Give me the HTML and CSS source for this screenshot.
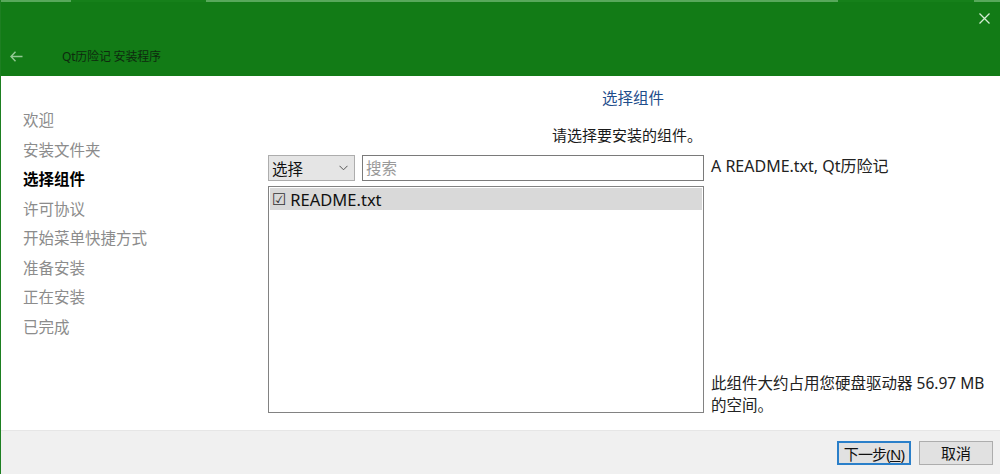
FILE: index.html
```html
<!DOCTYPE html>
<html lang="zh-CN">
<head>
  <meta charset="UTF-8">
  <meta name="viewport" content="width=device-width, initial-scale=1.0">
  <title>Qt历险记 安装程序</title>
  <link rel="stylesheet" href="styles.css">
</head>
<body>
  <div class="window">
    <div class="header">
      <div class="topline"></div>
      <button class="close" title="关闭">
        <svg width="11" height="11" viewBox="0 0 11 11"><path d="M0.5 0.5 L10.5 10.5 M10.5 0.5 L0.5 10.5" stroke="currentColor" stroke-width="1.3" fill="none"/></svg>
      </button>
      <div class="titlebar">
        <span class="back">
          <svg width="13" height="11" viewBox="0 0 13 11"><path d="M5.5 0.8 L1 5.5 L5.5 10.2 M1 5.5 L12.5 5.5" stroke="currentColor" stroke-width="1.4" fill="none"/></svg>
        </span>
        <span class="app-title">Qt历险记 安装程序</span>
      </div>
    </div>

    <div class="body">
      <ul class="steps">
        <li>欢迎</li>
        <li>安装文件夹</li>
        <li class="active">选择组件</li>
        <li>许可协议</li>
        <li>开始菜单快捷方式</li>
        <li>准备安装</li>
        <li>正在安装</li>
        <li>已完成</li>
      </ul>

      <div class="page">
        <h2 class="page-title">选择组件</h2>
        <div class="components">
          <p class="hint">请选择要安装的组件。</p>
          <div class="toolbar">
            <div class="combo">
              <span>选择</span>
              <svg width="9" height="6" viewBox="0 0 9 6"><path d="M0.5 0.8 L4.5 4.8 L8.5 0.8" stroke="#555" stroke-width="1" fill="none"/></svg>
            </div>
            <input class="search" type="text" placeholder="搜索">
          </div>
          <p class="description">A README.txt, Qt历险记</p>
          <ul class="tree">
            <li class="selected"><span class="check">☑</span>README.txt</li>
          </ul>
          <p class="size">此组件大约占用您硬盘驱动器 56.97 MB<br>的空间。</p>
        </div>
      </div>
    </div>

    <div class="footer">
      <button class="btn default">下一步(<u>N</u>)</button>
      <button class="btn">取消</button>
    </div>
  </div>
</body>
</html>
```

FILE: styles.css
```css
* {
  box-sizing: border-box;
}
body {
  margin: 0;
  font-family: "Noto Sans", "Noto Sans CJK SC", sans-serif;
  background: #fff;
  color: #1a1a1a;
}
.window {
  width: 1000px;
  height: 474px;
  display: flex;
  flex-direction: column;
  border-left: 1px solid #1d7f21;
  overflow: hidden;
}

/* green title area */
.header {
  position: relative;
  height: 76px;
  background: #127b16;
  display: flex;
  flex-direction: column;
}
.topline {
  height: 2px;
  background: linear-gradient(to right,
    #58a85b 0, #58a85b 70px, #16801a 70px, #16801a 205px,
    #58a85b 205px, #58a85b 837px, #16801a 837px, #16801a 973px,
    #58a85b 973px);
}
.close {
  position: absolute;
  top: 10px;
  right: 8px;
  width: 16px;
  height: 16px;
  padding: 2px;
  border: none;
  background: none;
  color: #d4ecd4;
  line-height: 0;
}
.titlebar {
  display: flex;
  align-items: center;
  margin-top: 45px;
  padding-left: 9px;
}
.back {
  color: #94c994;
  width: 52px;
  line-height: 0;
}
.app-title {
  font-size: 12px;
  color: #0e2a0e;
  letter-spacing: -0.2px;
}

/* main area */
.body {
  flex: 1;
  display: flex;
}
.steps {
  list-style: none;
  margin: 0;
  padding: 35px 0 0 22px;
  width: 267px;
  font-size: 15.5px;
}
.steps li {
  height: 29.5px;
  line-height: 18px;
  color: #8c8c8c;
}
.steps li.active {
  color: #000;
  font-weight: bold;
}
.page {
  flex: 1;
  padding-top: 12px;
}
.page-title {
  margin: 0;
  text-align: center;
  font-size: 15.5px;
  font-weight: normal;
  line-height: 20px;
  color: #1f4e8c;
  padding-right: 2px;
}
.components {
  display: grid;
  grid-template-columns: 436px 1fr;
  grid-template-rows: auto 26px 227px;
  column-gap: 7px;
  row-gap: 5px;
  margin-top: 16px;
}
.hint {
  margin: 1px 2px 4px 0;
  font-size: 15px;
  line-height: 21px;
  text-align: right;
  color: #1a1a1a;
  grid-column: 1;
}
.toolbar {
  display: flex;
  gap: 7px;
  grid-column: 1;
}
.combo {
  width: 87px;
  display: flex;
  align-items: center;
  justify-content: space-between;
  padding: 0 6px 0 3px;
  background: #e5e5e5;
  border: 1px solid #adadad;
  font-size: 15.5px;
  color: #111;
}
.search {
  flex: 1;
  border: 1px solid #7a7a7a;
  font: 15.5px "Noto Sans", "Noto Sans CJK SC", sans-serif;
  padding: 0 3px;
  outline: none;
}
.search::placeholder {
  color: #9a9a9a;
}
.description {
  margin: 0;
  grid-column: 2;
  grid-row: 2;
  font-size: 16px;
  line-height: 20px;
  color: #222;
  padding-top: 1px;
}
.tree {
  list-style: none;
  margin: 0;
  padding: 1px;
  border: 1px solid #828282;
  grid-column: 1;
  grid-row: 3;
}
.tree li {
  height: 22px;
  display: flex;
  align-items: center;
  gap: 4px;
  padding-left: 2px;
  font-size: 16.5px;
  color: #111;
}
.tree li.selected {
  background: #d9d9d9;
}
.check {
  font-family: "DejaVu Sans", sans-serif;
  font-size: 16px;
  color: #333;
}
.size {
  margin: 0;
  grid-column: 2;
  grid-row: 3;
  align-self: end;
  font-size: 15.5px;
  line-height: 22px;
  color: #222;
  margin-bottom: -3px;
  white-space: nowrap;
}

/* button bar */
.footer {
  height: 44px;
  background: #f0f0f0;
  border-top: 1px solid #e6e6e6;
  display: flex;
  justify-content: flex-end;
  align-items: center;
  gap: 8px;
  padding-right: 7px;
}
.btn {
  width: 74px;
  height: 24px;
  background: #e1e1e1;
  border: 1px solid #adadad;
  font: 15px "Noto Sans", "Noto Sans CJK SC", sans-serif;
  color: #111;
  padding: 0;
}
.btn.default {
  border: 2px solid #2a7fc9;
  letter-spacing: -0.8px;
}
```
